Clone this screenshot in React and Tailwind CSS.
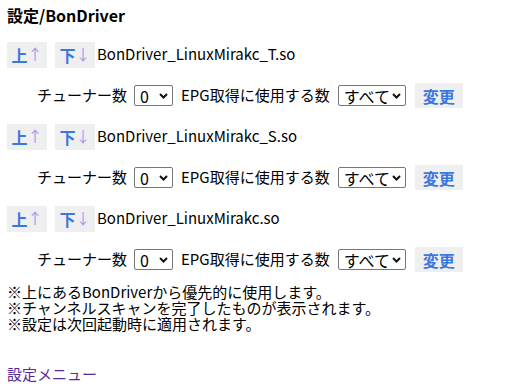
import React from "react";

const font = { fontFamily: '"Noto Sans CJK JP", "Noto Sans", sans-serif' };

function Chevron() {
  return (
    <svg width="9" height="6" viewBox="0 0 9 6" className="absolute right-[4px] top-[7px]">
      <path d="M1 1 L4.5 4.5 L8 1" fill="none" stroke="#111" strokeWidth="2" />
    </svg>
  );
}

function Sel({ value, w }) {
  return (
    <div className={`relative h-[21px] ${w} border border-[#767676] rounded-[2px] bg-white flex items-center pl-[5px] text-[16px] leading-none`}>
      <span>{value}</span>
      <Chevron />
    </div>
  );
}

function MoveBtn({ ch, arrow }) {
  return (
    <div className="w-[40px] h-[26px] bg-[#efefef] flex items-center justify-center">
      <span className="text-[16px] font-bold text-[#3a78e0]">{ch}</span>
      <span className="text-[15px] text-[#9a9af2]">{arrow}</span>
    </div>
  );
}

function Driver({ name }) {
  return (
    <>
      <div className="h-[41px] flex items-center">
        <MoveBtn ch="上" arrow="↑" />
        <div className="w-[8px]" />
        <MoveBtn ch="下" arrow="↓" />
        <span className="ml-[2px] text-[15px]">{name}</span>
      </div>
      <div className="h-[41px] flex items-center pl-[30px] text-[15px]">
        <span>チューナー数</span>
        <div className="ml-[7px]"><Sel value="0" w="w-[39px]" /></div>
        <span className="ml-[8px]">EPG取得に使用する数</span>
        <div className="ml-[8px]"><Sel value="すべて" w="w-[68px]" /></div>
        <div className="ml-[9px] w-[48px] h-[25px] bg-[#efefef] flex items-center justify-center text-[16px] font-bold text-[#3a78e0]">変更</div>
      </div>
    </>
  );
}

export default function App() {
  return (
    <div className="w-[519px] h-[386px] bg-white text-black px-[7px] overflow-hidden" style={font}>
      <div className="h-[30px] flex items-center text-[16px] font-bold">設定/BonDriver</div>
      <div className="mt-[4px]">
        <Driver name="BonDriver_LinuxMirakc_T.so" />
        <Driver name="BonDriver_LinuxMirakc_S.so" />
        <Driver name="BonDriver_LinuxMirakc.so" />
      </div>
      <div className="mt-[4px] text-[15px] leading-[16px]">
        <div>※上にあるBonDriverから優先的に使用します。</div>
        <div>※チャンネルスキャンを完了したものが表示されます。</div>
        <div>※設定は次回起動時に適用されます。</div>
      </div>
      <div className="mt-[34px] text-[15px] leading-[16px] text-[#5a2a94]">設定メニュー</div>
    </div>
  );
}
